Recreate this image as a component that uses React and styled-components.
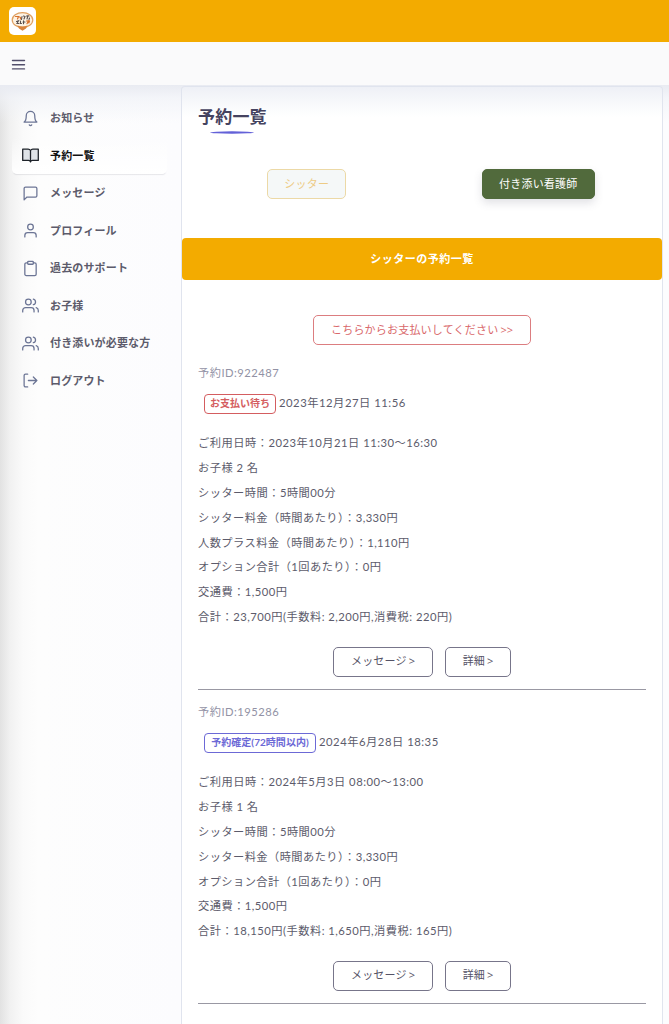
import React from "react";
import styled, { createGlobalStyle } from "styled-components";

const Global = createGlobalStyle`
  * { box-sizing: border-box; }
  body { margin: 0; background: #fff; color: #5c5b6b; font: 11px/25px Lato, "Noto Sans CJK JP", sans-serif; letter-spacing: .36px; }
`;
const Page = styled.div`height: 1024px; overflow: hidden; display: flex; flex-direction: column;`;
const Header = styled.header`height: 42px; flex: none; background: #f3ab00; padding: 7px 9px;`;
const Logo = styled.div`width: 27px; height: 28px; border-radius: 5px; background: #fff; svg { display: block; }`;
const Toolbar = styled.div`height: 43px; flex: none; background: #fafafb; display: flex; align-items: center; padding: 3px 9px 0; color: #514e6b;`;
const Body = styled.div`
  flex: 1; min-height: 0; display: flex;
  background: linear-gradient(#e9ebf2 0, rgba(240,242,247,.7) 13px, rgba(250,250,252,0) 38px), linear-gradient(90deg, #e2e2e2 0, #f1f1f1 10px, #fafafa 23px, #fdfdfd 38px, #fcfcfe 180px);
`;
const Sidebar = styled.nav`width: 181px; padding: 14px 14px 0 12px;`;
const MenuItem = styled.a`
  height: 37.5px; display: flex; align-items: center; gap: 11px; padding: 0 0 0 10px;
  font-weight: 700; letter-spacing: .15px; color: ${p => p.$active ? "#111" : "#5c5b6b"};
  border-radius: 5px;
  ${p => p.$active && "background: linear-gradient(rgba(255,255,255,0), #fff); box-shadow: 0 2px 1px -1px rgba(80,80,100,.13);"}
  svg { flex: none; margin-top: 1px; color: ${p => p.$active ? "#1d2229" : "#6c7595"}; }
`;
const Card = styled.main`
  width: 482px; margin-top: 1px; border: 1px solid #e0e4ee; border-bottom: 0; border-radius: 4px 4px 0 0;
  background: linear-gradient(#eef0f6, #fbfcfd 22px, #fff 30px);
`;
const Title = styled.h1`margin: 0; padding: 17px 0 0 16px; height: 82px; font-size: 17px; line-height: 26px; letter-spacing: .2px; color: #454360;`;
const Underline = styled.svg`display: block; margin: 1px 0 0 12px;`;
const Tabs = styled.div`display: flex; height: 69px;`;
const Tab = styled.div`flex: 1; display: flex; justify-content: center; align-items: flex-start; padding-left: ${p => p.$left}px;`;
const Button = styled.button`
  width: ${p => p.$w}px; height: 30px; padding: 0 0 2px; border: 1px solid ${p => p.$border || "#77758a"}; border-radius: 5px;
  background: ${p => p.$bg || "#fff"}; color: ${p => p.$color || "#555366"}; font: inherit; letter-spacing: .2px; white-space: nowrap;
  ${p => p.$raised && "box-shadow: 0 4px 9px rgba(80,80,100,.17);"}
`;
const Arrow = styled.span`font-family: "Open Sans", sans-serif; font-size: 11px; line-height: 1; letter-spacing: 0; margin-left: -1px;`;
const Banner = styled.h2`margin: 0; height: 42px; border-radius: 4px; background: #f3ab00; color: #fff; font-size: 11px; line-height: 41px; text-align: center; letter-spacing: .5px;`;
const Pay = styled.div`display: flex; justify-content: center; padding: 35px 0 15px;`;
const Booking = styled.section`margin: 0 16px 9px; border-bottom: 1px solid #9998a3; height: ${p => p.$h}px;`;
const BookingId = styled.div`height: 24px; line-height: 25px; color: #9292a5; font-size: 11.2px; letter-spacing: .5px;`;
const Status = styled.div`display: flex; align-items: center; gap: 3px; padding: 5px 0 0 6px; height: 32px; margin-bottom: 14px; font-size: 11.3px; line-height: 24px; letter-spacing: .5px;`;
const Badge = styled.span`
  width: ${p => p.$w}px; height: 20px; border: 1px solid ${p => p.$color}; border-radius: 4px; color: ${p => p.$color};
  font-size: 10px; font-weight: 700; line-height: 17px; text-align: center; letter-spacing: .04px; white-space: nowrap; margin-top: 3px;
`;
const Line = styled.div`height: 24.9px; white-space: nowrap; font-size: 11.25px; letter-spacing: ${p => p.$track}px;`;
const Actions = styled.div`display: flex; justify-content: center; gap: 12px; padding-top: 17.7px;`;

const IconSvg = ({ children, fill = "none" }) => (
  <svg width="17" height="17" viewBox="0 0 24 24" fill={fill} stroke="currentColor" strokeWidth="1.8" strokeLinecap="round" strokeLinejoin="round">{children}</svg>
);
const Bell = () => <IconSvg><path d="M18 8A6 6 0 0 0 6 8c0 7-3 9-3 9h18s-3-2-3-9M13.7 21a2 2 0 0 1-3.4 0" /></IconSvg>;
const Book = () => <IconSvg fill="#dfe3e8"><path d="M1 3h7a4 4 0 0 1 4 2 4 4 0 0 1 4-2h7v16h-8a3 3 0 0 0-3 2 3 3 0 0 0-3-2H1zM12 5v16" /></IconSvg>;
const Message = () => <IconSvg><path d="M21 15a2 2 0 0 1-2 2H7l-4 4V5a2 2 0 0 1 2-2h14a2 2 0 0 1 2 2z" /></IconSvg>;
const Person = () => <IconSvg><path d="M20 21v-2a4 4 0 0 0-4-4H8a4 4 0 0 0-4 4v2" /><circle cx="12" cy="7" r="4" /></IconSvg>;
const Clip = () => <IconSvg><path d="M16 4h2a2 2 0 0 1 2 2v14a2 2 0 0 1-2 2H6a2 2 0 0 1-2-2V6a2 2 0 0 1 2-2h2" /><rect x="8" y="2" width="8" height="4" rx="1" /></IconSvg>;
const People = () => <IconSvg><path d="M17 21v-2a4 4 0 0 0-4-4H5a4 4 0 0 0-4 4v2M23 21v-2a4 4 0 0 0-3-3.9M16 3.1a4 4 0 0 1 0 7.8" /><circle cx="9" cy="7" r="4" /></IconSvg>;
const Exit = () => <IconSvg><path d="M8 21H5a2 2 0 0 1-2-2V5a2 2 0 0 1 2-2h3M16 17l5-5-5-5M21 12H9" /></IconSvg>;

const menu = [
  [Bell, "お知らせ"], [Book, "予約一覧"], [Message, "メッセージ"], [Person, "プロフィール"],
  [Clip, "過去のサポート"], [People, "お子様"], [People, "付き添いが必要な方"], [Exit, "ログアウト"],
];
const bookings = [
  { id: "922487", status: "お支払い待ち", color: "#d45d60", w: 72, date: "2023年12月27日 11:56", h: 330, lines: [
    ["ご利用日時：2023年10月21日 11:30〜16:30", 0.49], ["お子様 2 名", 0.45], ["シッター時間：5時間00分", 0.45],
    ["シッター料金（時間あたり）：3,330円", 0.42], ["人数プラス料金（時間あたり）：1,110円", 0.42],
    ["オプション合計（1回あたり）：0円", 0.42], ["交通費：1,500円", 0.46], ["合計：23,700円(手数料: 2,200円,消費税: 220円)", 0.48]] },
  { id: "195286", status: "予約確定(72時間以内)", color: "#6c69d6", w: 112, date: "2024年6月28日 18:35", h: 305, lines: [
    ["ご利用日時：2024年5月3日 08:00〜13:00", 0.49], ["お子様 1 名", 0.45], ["シッター時間：5時間00分", 0.45],
    ["シッター料金（時間あたり）：3,330円", 0.42], ["オプション合計（1回あたり）：0円", 0.42],
    ["交通費：1,500円", 0.46], ["合計：18,150円(手数料: 1,650円,消費税: 165円)", 0.48]] },
];

export default function App() {
  return (
    <Page>
      <Global />
      <Header>
        <Logo>
          <svg width="27" height="28" viewBox="0 0 27 28" fill="none" strokeLinecap="round">
            <ellipse cx="13.5" cy="13" rx="10.3" ry="7.4" fill="#fdf3e4" stroke="#dfa061" strokeWidth="1.2" />
            <path d="M8.5 18.5q5 2 10 0l-1.5 3-3.5 2.3-3.5-2.3z" fill="#d9833c" />
            <path d="M6.5 9.5h3l-1 2.5M10.5 10q1.5 0 1 2" stroke="#d9702a" strokeWidth="1.2" />
            <path d="M13 9.5l-.5 3M14.5 9l1.5 .5-1 2.5M17.5 9h2.5M19 8.5l-1 3.5M20.5 11l-.5 1.5" stroke="#59504e" strokeWidth="1.1" />
            <path d="M7.5 14.5l2-.7-1.5 2.7h2M11.5 14v2.5h1M14.5 13.7v3M14 15h2" stroke="#59504e" strokeWidth="1.1" />
            <path d="M17.5 14l2-.3-1.5 3M20.5 14l-.7 2" stroke="#d9702a" strokeWidth="1.2" />
          </svg>
        </Logo>
      </Header>
      <Toolbar>
        <svg width="19" height="18" viewBox="0 0 19 18" stroke="currentColor" strokeWidth="1.4" strokeLinecap="round"><path d="M3.5 4.5h12M3.5 8.7h12M3.5 12.9h12" /></svg>
      </Toolbar>
      <Body>
        <Sidebar>
          {menu.map(([Icon, label], i) => (
            <MenuItem key={label} $active={i === 1}><Icon />{label}</MenuItem>
          ))}
        </Sidebar>
        <Card>
          <Title>予約一覧
            <Underline width="44" height="3" viewBox="0 0 44 3"><ellipse cx="22" cy="1.5" rx="22" ry="1.2" fill="#6361d8" /></Underline>
          </Title>
          <Tabs>
            <Tab $left={9}><Button $w={79} $bg="#f5f8f8" $border="#ecd9a6" $color="#edcb85">シッター</Button></Tab>
            <Tab $left={0}><Button $w={113} $bg="#516a3c" $border="#516a3c" $color="#fff" $raised>付き添い看護師</Button></Tab>
            <Spacer />
          </Tabs>
          <Banner>シッターの予約一覧</Banner>
          <Pay><Button $w={218} $border="#dc7d80" $color="#d9686b">こちらからお支払いしてください <Arrow>&gt;&gt;</Arrow></Button></Pay>
          {bookings.map(b => (
            <Booking key={b.id} $h={b.h}>
              <BookingId>予約ID:{b.id}</BookingId>
              <Status><Badge $w={b.w} $color={b.color}>{b.status}</Badge>{b.date}</Status>
              {b.lines.map(([text, track]) => <Line key={text} $track={track}>{text}</Line>)}
              <Actions><Button $w={100}>メッセージ <Arrow>&gt;</Arrow></Button><Button $w={66}>詳細 <Arrow>&gt;</Arrow></Button></Actions>
            </Booking>
          ))}
        </Card>
      </Body>
    </Page>
  );
}

const Spacer = styled.div`width: 8px; flex: none;`;
